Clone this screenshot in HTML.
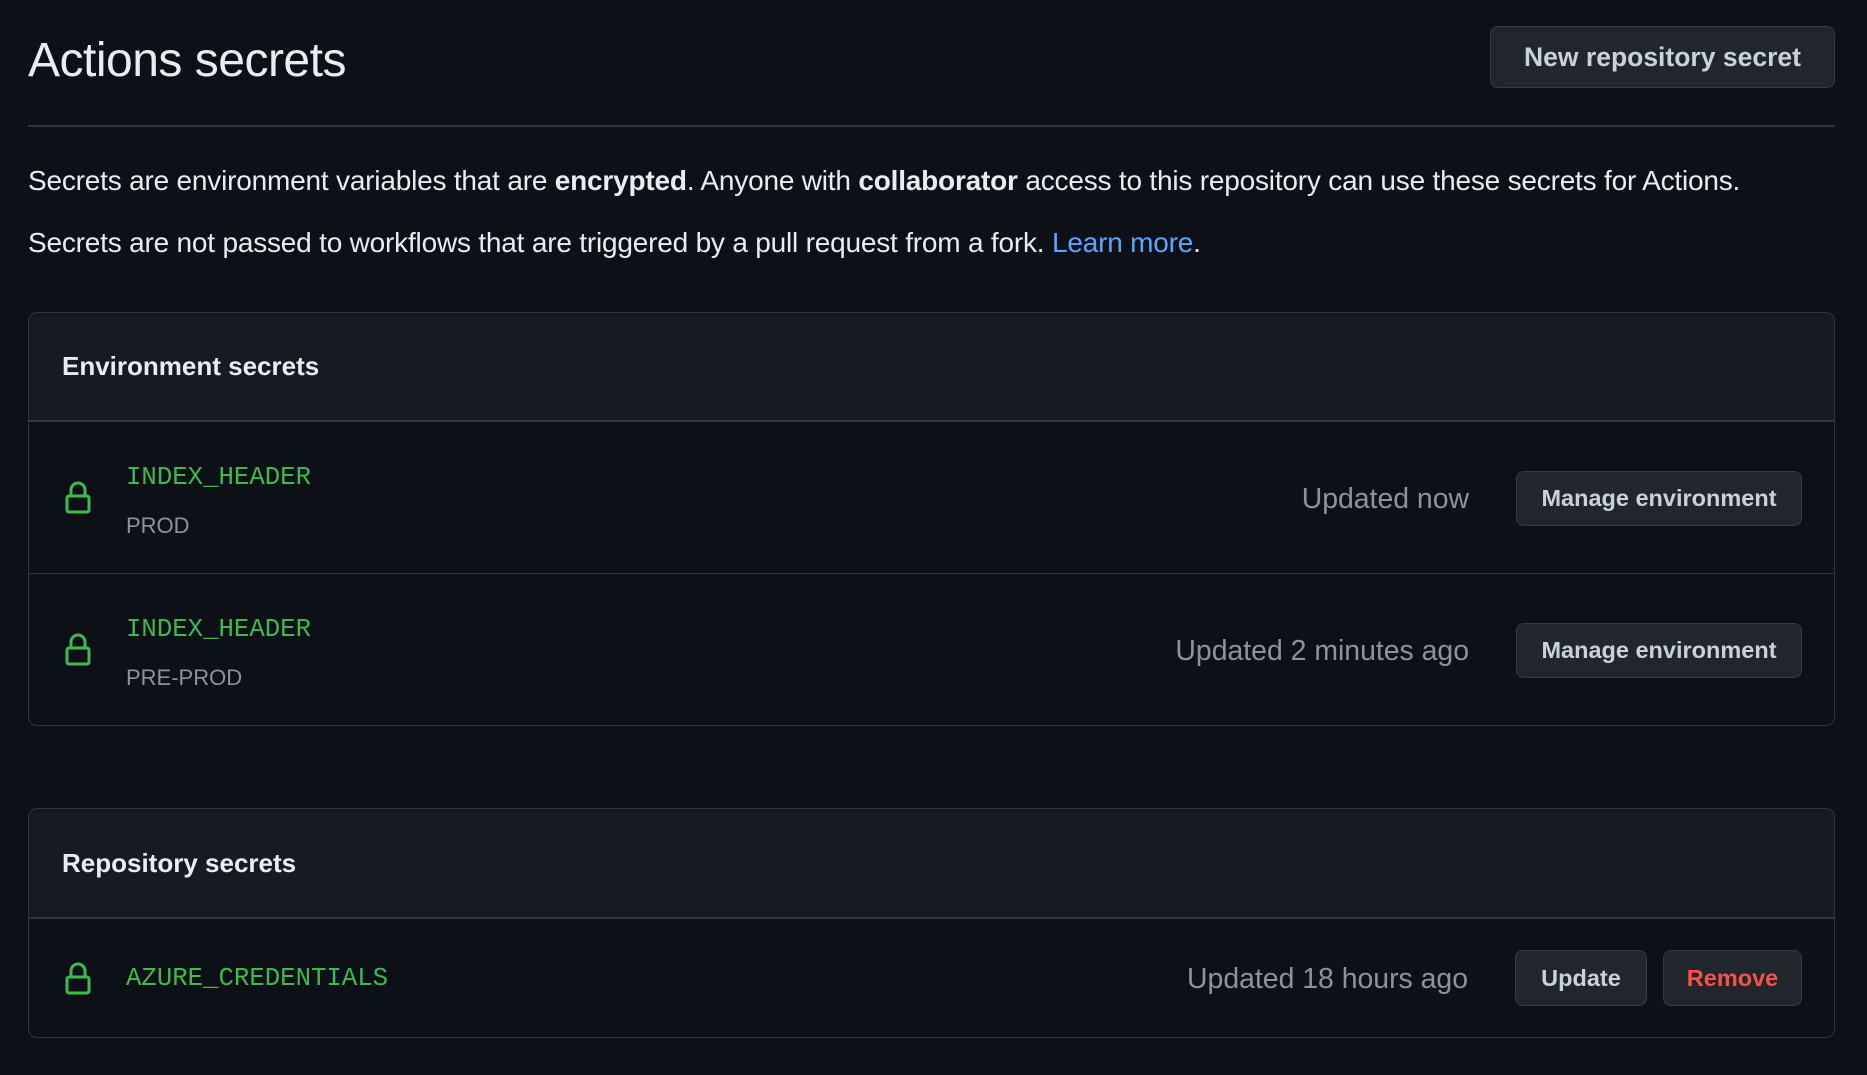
<!DOCTYPE html>
<html><head><meta charset="utf-8"><style>
*{box-sizing:border-box;margin:0;padding:0}
body{width:1867px;height:1075px;background:#0d1117;color:#c9d1d9;font-family:"Liberation Sans",sans-serif;position:relative;overflow:hidden}
h1{position:absolute;left:28px;top:33px;font-size:48px;font-weight:400;color:#e6edf3;letter-spacing:-0.5px}
.btn{position:absolute;background:#21262d;border:1.5px solid #363b42;border-radius:8px;color:#c9d1d9;font-weight:700;display:flex;align-items:center;justify-content:center;font-size:23.5px}
.divider{position:absolute;left:28px;width:1807px;top:125px;height:1.5px;background:#30363d}
p{position:absolute;left:28px;font-size:28px;color:#e6edf3;white-space:nowrap;letter-spacing:-0.2px}
p b{font-weight:700}
a{color:#58a6ff;text-decoration:none}
.box{position:absolute;left:28px;width:1807px;border:1.5px solid #30363d;border-radius:9px;overflow:hidden}
.hd{background:#161b22;border-bottom:1.5px solid #30363d;font-weight:700;font-size:26px;padding-left:33px;display:flex;align-items:center;color:#e6edf3}
.row{position:relative;border-top:1.5px solid #30363d}
.row:first-of-type{border-top:none}
.name{position:absolute;left:97px;font-family:"Liberation Mono",monospace;font-size:25.7px;color:#3fb950}
.sub{position:absolute;left:97px;font-size:22px;color:#8b949e}
.upd{position:absolute;right:365px;font-size:28.4px;color:#8b949e;white-space:nowrap}
.lock{position:absolute;left:36px}
</style></head><body>
<h1>Actions secrets</h1>
<div class="btn" style="left:1490px;top:26px;width:345px;height:62px;font-size:26.5px">New repository secret</div>
<div class="divider"></div>
<p style="top:165px">Secrets are environment variables that are <b>encrypted</b>. Anyone with <b>collaborator</b> access to this repository can use these secrets for Actions.</p>
<p style="top:227px">Secrets are not passed to workflows that are triggered by a pull request from a fork. <a>Learn more</a>.</p>

<div class="box" style="top:312px;height:414px">
 <div class="hd" style="height:108px">Environment secrets</div>
 <div class="row" style="height:152px">
  <svg class="lock" style="top:59px" width="26" height="33" viewBox="0 0 26 33"><path d="M6 15V9a7 7 0 0 1 14 0v6" fill="none" stroke="#3fb950" stroke-width="3"/><rect x="2" y="15" width="22" height="16" rx="2" fill="none" stroke="#3fb950" stroke-width="3"/></svg>
  <div class="name" style="top:41px">INDEX_HEADER</div>
  <div class="sub" style="top:91px">PROD</div>
  <div class="upd" style="top:61px">Updated now</div>
  <div class="btn" style="left:1487px;top:49px;width:286px;height:55px">Manage environment</div>
 </div>
 <div class="row" style="height:152px">
  <svg class="lock" style="top:59px" width="26" height="33" viewBox="0 0 26 33"><path d="M6 15V9a7 7 0 0 1 14 0v6" fill="none" stroke="#3fb950" stroke-width="3"/><rect x="2" y="15" width="22" height="16" rx="2" fill="none" stroke="#3fb950" stroke-width="3"/></svg>
  <div class="name" style="top:41px">INDEX_HEADER</div>
  <div class="sub" style="top:91px">PRE-PROD</div>
  <div class="upd" style="top:61px">Updated 2 minutes ago</div>
  <div class="btn" style="left:1487px;top:49px;width:286px;height:55px">Manage environment</div>
 </div>
</div>

<div class="box" style="top:808px;height:230px">
 <div class="hd" style="height:109px">Repository secrets</div>
 <div class="row" style="height:120px">
  <svg class="lock" style="top:43px" width="26" height="33" viewBox="0 0 26 33"><path d="M6 15V9a7 7 0 0 1 14 0v6" fill="none" stroke="#3fb950" stroke-width="3"/><rect x="2" y="15" width="22" height="16" rx="2" fill="none" stroke="#3fb950" stroke-width="3"/></svg>
  <div class="name" style="top:45px">AZURE_CREDENTIALS</div>
  <div class="upd" style="top:44px;right:366px">Updated 18 hours ago</div>
  <div class="btn" style="left:1486px;top:31px;width:132px;height:56px">Update</div>
  <div class="btn" style="left:1634px;top:31px;width:139px;height:56px;color:#f85149">Remove</div>
 </div>
</div>
</body></html>
